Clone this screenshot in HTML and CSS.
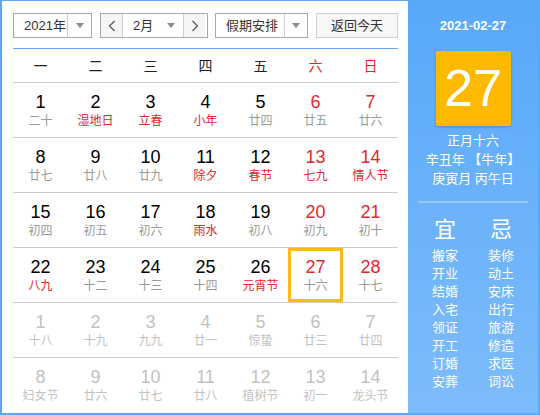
FILE: index.html
```html
<!DOCTYPE html>
<html lang="zh-CN">
<head>
<meta charset="utf-8">
<title>万年历</title>
<link rel="stylesheet" href="styles.css">
</head>
<body>
<div class="calendar">
  <div class="main">
    <div class="toolbar">
      <div class="select year">
        <span class="sel-text">2021年</span>
        <span class="sel-arrow"><i class="tri"></i></span>
      </div>
      <div class="month-group">
        <span class="nav-btn"><svg width="8" height="12" viewBox="0 0 8 12"><polyline points="6.5,1 1.5,6 6.5,11" fill="none" stroke="#555" stroke-width="1.2"/></svg></span>
        <span class="month-sel"><span class="sel-text">2月</span><i class="tri"></i></span>
        <span class="nav-btn"><svg width="8" height="12" viewBox="0 0 8 12"><polyline points="1.5,1 6.5,6 1.5,11" fill="none" stroke="#555" stroke-width="1.2"/></svg></span>
      </div>
      <div class="select holiday">
        <span class="sel-text">假期安排</span>
        <span class="sel-arrow"><i class="tri"></i></span>
      </div>
      <div class="today-btn">返回今天</div>
    </div>
    <div class="week">
      <span>一</span><span>二</span><span>三</span><span>四</span><span>五</span><span class="red">六</span><span class="red">日</span>
    </div>
    <div class="row">
      <div class="cell"><b>1</b><em>二十</em></div>
      <div class="cell"><b>2</b><em class="red">湿地日</em></div>
      <div class="cell"><b>3</b><em class="red">立春</em></div>
      <div class="cell"><b>4</b><em class="red">小年</em></div>
      <div class="cell"><b>5</b><em>廿四</em></div>
      <div class="cell"><b class="red">6</b><em>廿五</em></div>
      <div class="cell"><b class="red">7</b><em>廿六</em></div>
    </div>
    <div class="row">
      <div class="cell"><b>8</b><em>廿七</em></div>
      <div class="cell"><b>9</b><em>廿八</em></div>
      <div class="cell"><b>10</b><em>廿九</em></div>
      <div class="cell"><b>11</b><em class="red">除夕</em></div>
      <div class="cell"><b>12</b><em class="red">春节</em></div>
      <div class="cell"><b class="red">13</b><em class="red">七九</em></div>
      <div class="cell"><b class="red">14</b><em class="red">情人节</em></div>
    </div>
    <div class="row">
      <div class="cell"><b>15</b><em>初四</em></div>
      <div class="cell"><b>16</b><em>初五</em></div>
      <div class="cell"><b>17</b><em>初六</em></div>
      <div class="cell"><b>18</b><em class="red">雨水</em></div>
      <div class="cell"><b>19</b><em>初八</em></div>
      <div class="cell"><b class="red">20</b><em>初九</em></div>
      <div class="cell"><b class="red">21</b><em>初十</em></div>
    </div>
    <div class="row">
      <div class="cell"><b>22</b><em class="red">八九</em></div>
      <div class="cell"><b>23</b><em>十二</em></div>
      <div class="cell"><b>24</b><em>十三</em></div>
      <div class="cell"><b>25</b><em>十四</em></div>
      <div class="cell"><b>26</b><em class="red">元宵节</em></div>
      <div class="cell selected"><b class="red">27</b><em>十六</em></div>
      <div class="cell"><b class="red">28</b><em>十七</em></div>
    </div>
    <div class="row other">
      <div class="cell"><b>1</b><em>十八</em></div>
      <div class="cell"><b>2</b><em>十九</em></div>
      <div class="cell"><b>3</b><em>九九</em></div>
      <div class="cell"><b>4</b><em>廿一</em></div>
      <div class="cell"><b>5</b><em>惊蛰</em></div>
      <div class="cell"><b>6</b><em>廿三</em></div>
      <div class="cell"><b>7</b><em>廿四</em></div>
    </div>
    <div class="row other last">
      <div class="cell"><b>8</b><em>妇女节</em></div>
      <div class="cell"><b>9</b><em>廿六</em></div>
      <div class="cell"><b>10</b><em>廿七</em></div>
      <div class="cell"><b>11</b><em>廿八</em></div>
      <div class="cell"><b>12</b><em>植树节</em></div>
      <div class="cell"><b>13</b><em>初一</em></div>
      <div class="cell"><b>14</b><em>龙头节</em></div>
    </div>
  </div>
  <div class="side">
    <div class="side-date">2021-02-27</div>
    <div class="day-box">27</div>
    <div class="lunar">
      <div>正月十六</div>
      <div>辛丑年 【牛年】</div>
      <div>庚寅月 丙午日</div>
    </div>
    <div class="sep"></div>
    <div class="yiji">
      <div class="col">
        <div class="head">宜</div>
        <div>搬家</div><div>开业</div><div>结婚</div><div>入宅</div><div>领证</div><div>开工</div><div>订婚</div><div>安葬</div>
      </div>
      <div class="col">
        <div class="head">忌</div>
        <div>装修</div><div>动土</div><div>安床</div><div>出行</div><div>旅游</div><div>修造</div><div>求医</div><div>词讼</div>
      </div>
    </div>
  </div>
</div>
</body>
</html>
```

FILE: styles.css
```css
html, body {
  margin: 0;
  padding: 0;
  background: #fff;
}
body {
  font-family: "Liberation Sans", "Noto Sans CJK SC", sans-serif;
}
.calendar {
  box-sizing: border-box;
  width: 540px;
  height: 415px;
  border: 2px solid #5ba8f6;
  border-top-width: 1px;
  display: flex;
  overflow: hidden;
}
.main {
  width: 406px;
  box-sizing: border-box;
  padding: 12px 10px 0 11px;
  background: #fff;
}
.toolbar {
  display: flex;
  height: 25px;
  padding-bottom: 10px;
  border-bottom: 1px solid #5ba8f6;
  font-size: 13px;
  color: #333;
  white-space: nowrap;
}
.select {
  box-sizing: border-box;
  height: 25px;
  border: 1px solid #a9a9a9;
  display: flex;
  background: #fff;
}
.sel-text {
  line-height: 23px;
}
.select .sel-text {
  flex: 1;
  min-width: 0;
  padding-left: 10px;
}
.sel-arrow {
  flex: none;
  width: 23px;
  border-left: 1px solid #d0d0d0;
  display: flex;
  align-items: center;
  justify-content: center;
}
.tri {
  display: block;
  width: 0;
  height: 0;
  border-left: 4px solid transparent;
  border-right: 4px solid transparent;
  border-top: 5px solid #8a8a8a;
}
.year {
  width: 79px;
}
.month-group {
  box-sizing: border-box;
  margin-left: 8px;
  width: 108px;
  height: 25px;
  border: 1px solid #a9a9a9;
  display: flex;
}
.nav-btn {
  width: 21px;
  background: #f5f5f5;
  display: flex;
  align-items: center;
  justify-content: center;
}
.month-sel {
  width: 62px;
  box-sizing: border-box;
  border-left: 1px solid #d0d0d0;
  border-right: 1px solid #d0d0d0;
  display: flex;
  align-items: center;
  padding: 0 8px 0 10px;
  background: #fff;
}
.month-sel .sel-text {
  flex: 1;
}
.holiday {
  margin-left: 7px;
  width: 93px;
}
.holiday .sel-arrow {
  width: 22px;
}
.today-btn {
  box-sizing: border-box;
  margin-left: 8px;
  width: 82px;
  height: 25px;
  border: 1px solid #cfcfcf;
  background: #f7f7f7;
  text-align: center;
  line-height: 23px;
}
.week {
  display: grid;
  grid-template-columns: repeat(7, 1fr);
  height: 33px;
  border-bottom: 1px solid #cccccc;
  font-size: 14px;
  line-height: 34px;
  text-align: center;
  color: #222;
}
.row {
  display: grid;
  grid-template-columns: repeat(7, 1fr);
  height: 54px;
  border-bottom: 1px solid #cccccc;
}
.row.last {
  border-bottom: none;
}
.cell {
  box-sizing: border-box;
  padding-top: 8px;
  text-align: center;
}
.cell b {
  display: block;
  font-weight: normal;
  font-size: 18px;
  line-height: 22px;
  color: #000;
}
.cell em {
  display: block;
  font-style: normal;
  font-size: 12px;
  line-height: 17px;
  color: #999;
}
.cell b.red, .cell em.red, .week .red {
  color: #e5262d;
}
.other .cell b, .other .cell em {
  color: #c2c2c2;
}
.cell.selected {
  box-shadow: inset 0 0 0 3px #fdb915;
}
.side {
  flex: 1;
  background: linear-gradient(#58a8fa, #7dbcfa);
  color: #fff;
  display: flex;
  flex-direction: column;
  align-items: center;
  padding-top: 16px;
}
.side-date {
  font-size: 13px;
  font-weight: bold;
  line-height: 18px;
}
.day-box {
  margin-top: 16px;
  width: 75px;
  height: 75px;
  background: #ffb900;
  border-radius: 2px;
  box-shadow: 0 1px 3px rgba(0, 0, 0, 0.2);
  font-size: 52px;
  line-height: 75px;
  text-align: center;
}
.lunar {
  margin-top: 5px;
  font-size: 13px;
  line-height: 19px;
  text-align: center;
}
.sep {
  margin-top: 13px;
  width: 110px;
  height: 2px;
  background: rgba(255, 255, 255, 0.3);
}
.yiji {
  display: grid;
  grid-template-columns: 56px 56px;
  margin-top: 12px;
  font-size: 13px;
  line-height: 18px;
  text-align: center;
}
.yiji .head {
  font-size: 22px;
  line-height: 30px;
  margin-bottom: 2px;
}
```
